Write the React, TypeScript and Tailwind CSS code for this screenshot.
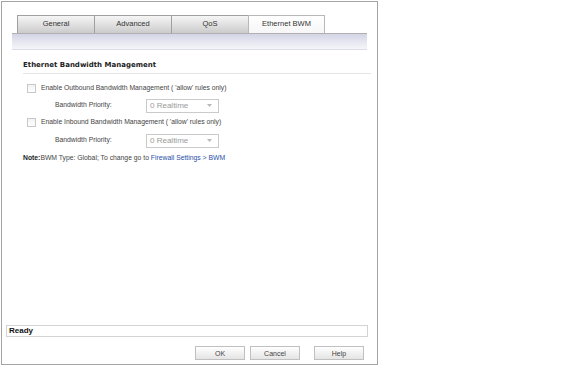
import React from "react";

const tabs = ["General", "Advanced", "QoS", "Ethernet BWM"];

function Checkbox() {
  return (
    <span className="inline-block w-[9px] h-[9px] border border-[#c8c8c8] bg-[linear-gradient(#f2f2f2,#ffffff)]" />
  );
}

function PrioritySelect() {
  return (
    <div className="flex items-center justify-between w-[73px] h-[14px] border border-[#cacaca] bg-white pl-[3px] pr-[6px]">
      <span className="text-[8px] text-[#9a9a9a] leading-none">0 Realtime</span>
      <svg width="5" height="3" viewBox="0 0 5 3">
        <path d="M0 0 L5 0 L2.5 3 Z" fill="#b8b8b8" />
      </svg>
    </div>
  );
}

function Btn({ label }: { label: string }) {
  return (
    <button className="w-[50px] h-[14px] border border-[#c0c0c0] bg-[linear-gradient(#ffffff,#e4e4e4)] text-[7px] text-[#444] leading-none">
      {label}
    </button>
  );
}

export default function App() {
  return (
    <main className="w-[574px] h-[372px] bg-white pt-[1px] pl-[1px] font-['Liberation_Sans',Arial,sans-serif]">
      <div className="w-[377px] h-[364px] border border-[#a4a4a4] flex flex-col">
        {/* tabs */}
        <div className="flex pl-[15px] pt-[13px]">
          {tabs.map((t, i) => (
            <div
              key={t}
              className={
                i === 3
                  ? "w-[77px] h-[18px] border border-b-0 border-[#b8b8b8] bg-[linear-gradient(#ffffff,#f6f6f8)] flex items-center justify-center pb-[1px] text-[7.5px] text-[#333]"
                  : "w-[77px] h-[18px] border border-b-0 border-r-0 border-[#a0a0a0] bg-[linear-gradient(#f6f6f6,#cbcbcb)] flex items-center justify-center pb-[1px] text-[7.5px] text-[#333]"
              }
            >
              {t}
            </div>
          ))}
        </div>
        <div className="mx-[10px] h-[17px] border-t border-[#b0b0b0] border-b border-b-[#dcdde8] bg-[linear-gradient(#d3d5e6,#f5f6f9)]" />

        {/* content */}
        <div className="flex-1 pl-[21px] pr-[6px] pt-[10px]">
          <div className="border-b border-[#e4e4e4] pb-[2px] text-[7px] font-bold text-[#222] font-['DejaVu_Sans',Verdana,sans-serif]">
            Ethernet Bandwidth Management
          </div>

          <div className="flex items-center gap-[5px] pl-[4px] mt-[10px] text-[6.8px] text-[#444] h-[10px]">
            <Checkbox />
            <span>Enable Outbound Bandwidth Management ( 'allow' rules only)</span>
          </div>
          <div className="flex items-center mt-[5px] h-[14px]">
            <span className="w-[123px] pl-[32px] text-[6.8px] text-[#444]">Bandwidth Priority:</span>
            <PrioritySelect />
          </div>
          <div className="flex items-center gap-[5px] pl-[4px] mt-[5px] text-[6.8px] text-[#444] h-[10px]">
            <Checkbox />
            <span>Enable Inbound Bandwidth Management ( 'allow' rules only)</span>
          </div>
          <div className="flex items-center mt-[6px] h-[14px]">
            <span className="w-[123px] pl-[32px] text-[6.8px] text-[#444]">Bandwidth Priority:</span>
            <PrioritySelect />
          </div>
          <div className="mt-[5px] text-[6.8px] text-[#444]">
            <span className="font-bold text-[#222]">Note:</span>BWM Type: Global; To change go to{" "}
            <span className="text-[#2a4fa8]">Firewall Settings &gt; BWM</span>
          </div>
        </div>

        {/* status */}
        <div className="ml-[4px] w-[362px] h-[12px] border border-[#d4d4d4] flex items-center pl-[2px] text-[8px] font-bold text-[#111]">
          Ready
        </div>
        <div className="flex justify-end gap-[5px] pr-[13px] pt-[9px] h-[27px]">
          <Btn label="OK" />
          <Btn label="Cancel" />
          <div className="w-[4px]" />
          <Btn label="Help" />
        </div>
      </div>
    </main>
  );
}
